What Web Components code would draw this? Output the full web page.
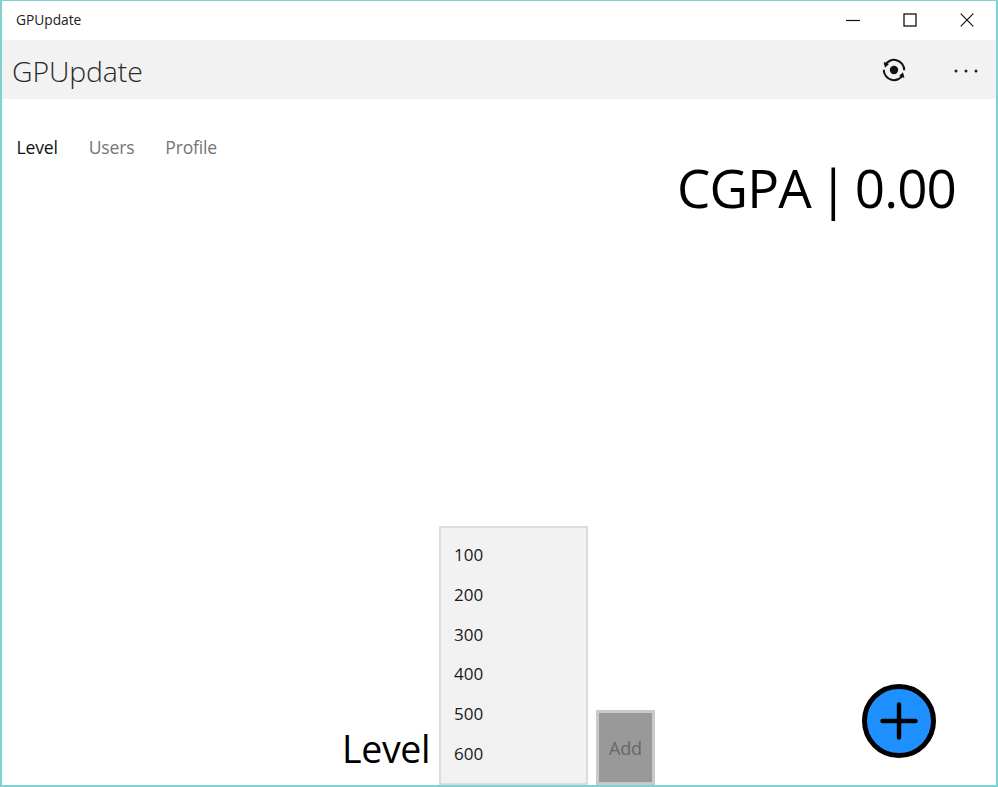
<!DOCTYPE html>
<html><head><meta charset="utf-8">
<style>
html,body{margin:0;padding:0;background:#fff}
body{font-family:"Open Sans","Noto Sans","Liberation Sans",sans-serif}
</style></head><body>
<gp-window>
  <gp-titlebar slot="title">GPUpdate</gp-titlebar>
  <gp-appbar slot="bar">GPUpdate</gp-appbar>
  <gp-pivot slot="pivot"><span>Level</span><span>Users</span><span>Profile</span></gp-pivot>
  <gp-score slot="score">CGPA | 0.00</gp-score>
  <gp-addrow slot="row">
    <span slot="label">Level</span>
    <gp-listbox slot="list"><span>100</span><span>200</span><span>300</span><span>400</span><span>500</span><span>600</span></gp-listbox>
    <gp-button slot="btn">Add</gp-button>
    <gp-fab slot="fab"></gp-fab>
  </gp-addrow>
</gp-window>
<script>
function def(name,html){
  customElements.define(name,class extends HTMLElement{
    constructor(){super();this.attachShadow({mode:'open'}).innerHTML=html;}
  });
}
def('gp-window',`<style>
:host{display:flex;flex-direction:column;box-sizing:border-box;width:998px;height:787px;border:solid #7fd2d2;border-width:1px 2px 2px 2px;background:#fff;overflow:hidden}
.top{display:flex;justify-content:space-between;align-items:flex-start;flex:1;min-height:0}
</style><slot name="title"></slot><slot name="bar"></slot><div class="top"><slot name="pivot"></slot><slot name="score"></slot></div><slot name="row"></slot>`);
def('gp-titlebar',`<style>
:host{display:flex;align-items:center;height:39px;flex:none;font-size:13.8px;color:#222;letter-spacing:-.05px;padding-right:1px}
.t{flex:1;padding-left:14px;padding-bottom:2px}
.b{width:57px;height:39px;display:flex;align-items:center;justify-content:center}
svg{display:block;margin-bottom:2px}
</style><div class="t"><slot></slot></div>
<div class="b"><svg width="14" height="14" viewBox="0 0 14 14"><path d="M0 7.5H14" stroke="#111" stroke-width="1.2"/></svg></div>
<div class="b"><svg width="14" height="14" viewBox="0 0 14 14"><rect x="1" y="1" width="12" height="12" fill="none" stroke="#111" stroke-width="1.3"/></svg></div>
<div class="b"><svg width="14" height="14" viewBox="0 0 14 14"><path d="M.7.7 13.3 13.3M13.3.7.7 13.3" stroke="#111" stroke-width="1.2"/></svg></div>`);
def('gp-appbar',`<style>
:host{display:flex;align-items:center;height:59px;flex:none;background:#f2f2f2;font-size:28.4px;font-weight:300;color:#2a2a2a;letter-spacing:-.1px}
.t{flex:1;padding-left:10px;padding-top:3px}
.i{height:59px;display:flex;align-items:center;justify-content:center}
.sync{width:84px}
.more{width:60px;padding-top:3px;box-sizing:border-box}
svg{display:block}
</style><div class="t"><slot></slot></div>
<div class="i sync"><svg width="26" height="26" viewBox="0 0 26 26">
<circle cx="13" cy="13" r="4.2" fill="#111"/>
<g transform="rotate(18 13 13)">
<path d="M2.9 11.2A10.3 10.3 0 0 1 22.8 10M23.1 14.8A10.3 10.3 0 0 1 3.2 16" fill="none" stroke="#111" stroke-width="2"/>
<path d="M.6 8.6 6.4 8.9 3.8 13.6ZM25.4 17.4 19.6 17.1 22.2 12.4Z" fill="#111"/></g></svg></div>
<div class="i more"><svg width="26" height="6" viewBox="0 0 26 6"><circle cx="3" cy="3" r="1.5" fill="#222"/><circle cx="13" cy="3" r="1.5" fill="#222"/><circle cx="23" cy="3" r="1.5" fill="#222"/></svg></div>`);
def('gp-pivot',`<style>
:host{display:flex;gap:31px;padding:36px 0 0 14.5px;font-size:17.6px;letter-spacing:-.2px;color:#757575}
::slotted(:first-child){color:#111}
</style><slot></slot>`);
def('gp-score',`<style>
:host{display:block;margin:51px 40px 0 0;font-size:53px;line-height:76px;color:#000;letter-spacing:-.9px;word-spacing:-5px;white-space:nowrap}
</style><slot></slot>`);
def('gp-addrow',`<style>
:host{display:flex;align-items:flex-end;flex:none;height:259px}
.lab{width:428px;display:flex;justify-content:flex-end;padding:0 9px 10px 0;box-sizing:border-box;font-size:37.5px;line-height:52px;color:#000;letter-spacing:-.4px;margin-left:9px}
.fab{margin-left:207px;margin-bottom:27px}
.btn{margin-left:8px}
</style><div class="lab"><slot name="label"></slot></div><slot name="list"></slot><div class="btn"><slot name="btn"></slot></div><div class="fab"><slot name="fab"></slot></div>`);
def('gp-listbox',`<style>
:host{display:flex;flex-direction:column;box-sizing:border-box;width:149px;height:259px;background:#f2f2f2;border:2px solid #dcdcdc;padding:7px 0 0 13px;font-size:17px;color:#1a1a1a}
::slotted(span){height:39.8px;line-height:40px;display:block}
</style><slot></slot>`);
def('gp-button',`<style>
:host{display:flex;align-items:center;justify-content:center;box-sizing:border-box;width:59px;height:75px;background:#999;border:3px solid #c9c9c9;font-size:18px;color:#686868;letter-spacing:-.2px}
</style><slot></slot>`);
def('gp-fab',`<style>
:host{display:block;width:74px;height:74px}
svg{display:block}
</style><svg width="74" height="74" viewBox="0 0 74 74"><circle cx="37" cy="37" r="34.5" fill="#1e90ff" stroke="#000" stroke-width="5"/><path d="M37 20.5V53.5M20.5 37H53.5" stroke="#000" stroke-width="4.4" stroke-linecap="round"/></svg>`);
</script>
</body></html>
